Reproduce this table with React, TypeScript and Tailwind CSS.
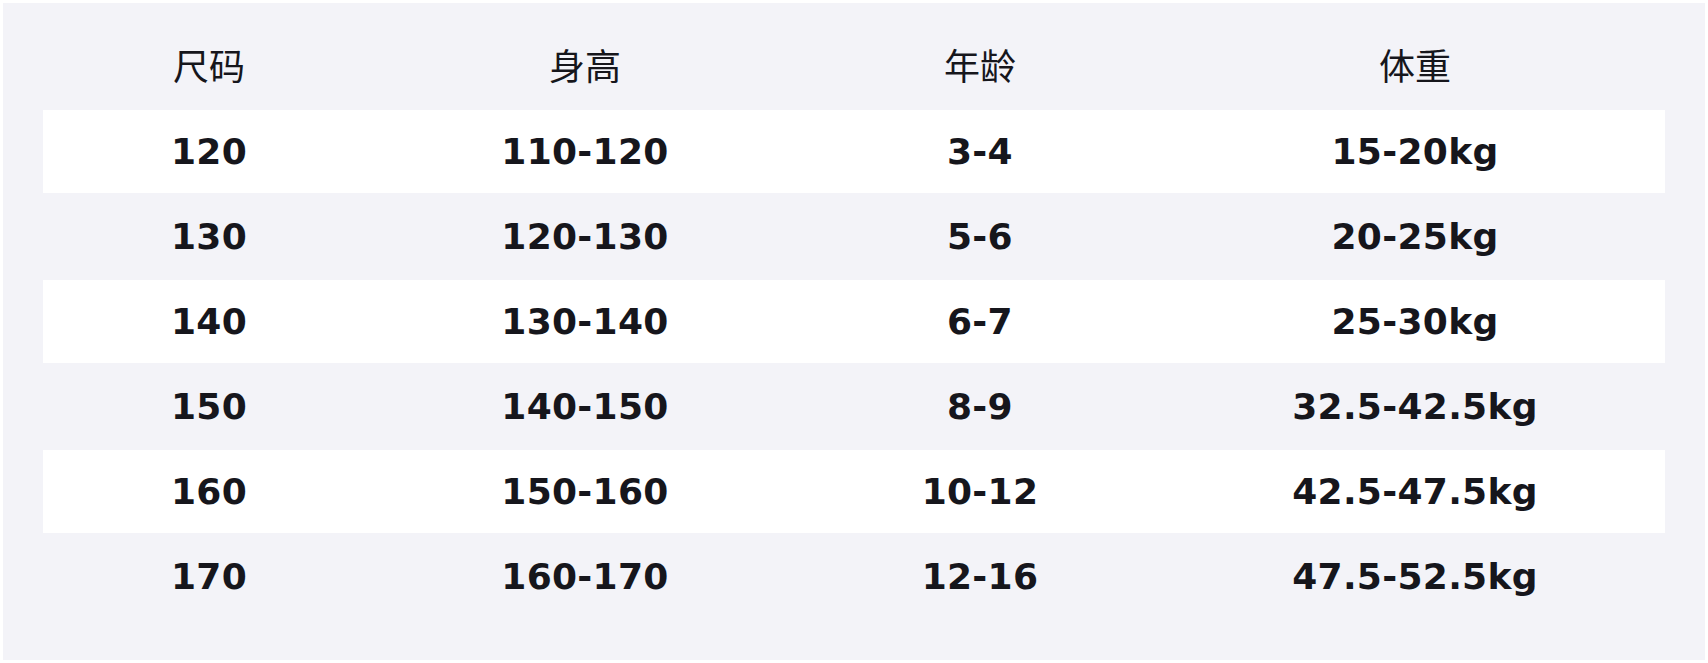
import React from "react";

const rows = [
  ["120", "110-120", "3-4", "15-20kg"],
  ["130", "120-130", "5-6", "20-25kg"],
  ["140", "130-140", "6-7", "25-30kg"],
  ["150", "140-150", "8-9", "32.5-42.5kg"],
  ["160", "150-160", "10-12", "42.5-47.5kg"],
  ["170", "160-170", "12-16", "47.5-52.5kg"],
];

const cols = "grid grid-cols-[332px_420px_370px_500px]";

export default function App() {
  return (
    <div className="bg-white p-[3px] w-[1708px] h-[663px]">
      <div className="bg-[#f3f3f8] h-[657px] px-[40px] pt-[40px] text-[#16161c]">
        <div
          className={`${cols} h-[67px] text-[36px] leading-[43px]`}
          style={{ fontFamily: '"Noto Sans CJK SC", "Noto Sans", sans-serif' }}
        >
          <div className="text-center">尺码</div>
          <div className="text-center">身高</div>
          <div className="text-center">年龄</div>
          <div className="text-center">体重</div>
        </div>
        {rows.map((r, i) => (
          <div
            key={i}
            className={`${cols} items-center font-bold text-[36px] tracking-[0.3px] ${
              i % 2 === 0 ? "bg-white h-[83px]" : "h-[87px]"
            }`}
            style={{ fontFamily: '"DejaVu Sans", sans-serif' }}
          >
            {r.map((c, j) => (
              <div key={j} className="text-center">
                {c}
              </div>
            ))}
          </div>
        ))}
      </div>
    </div>
  );
}
